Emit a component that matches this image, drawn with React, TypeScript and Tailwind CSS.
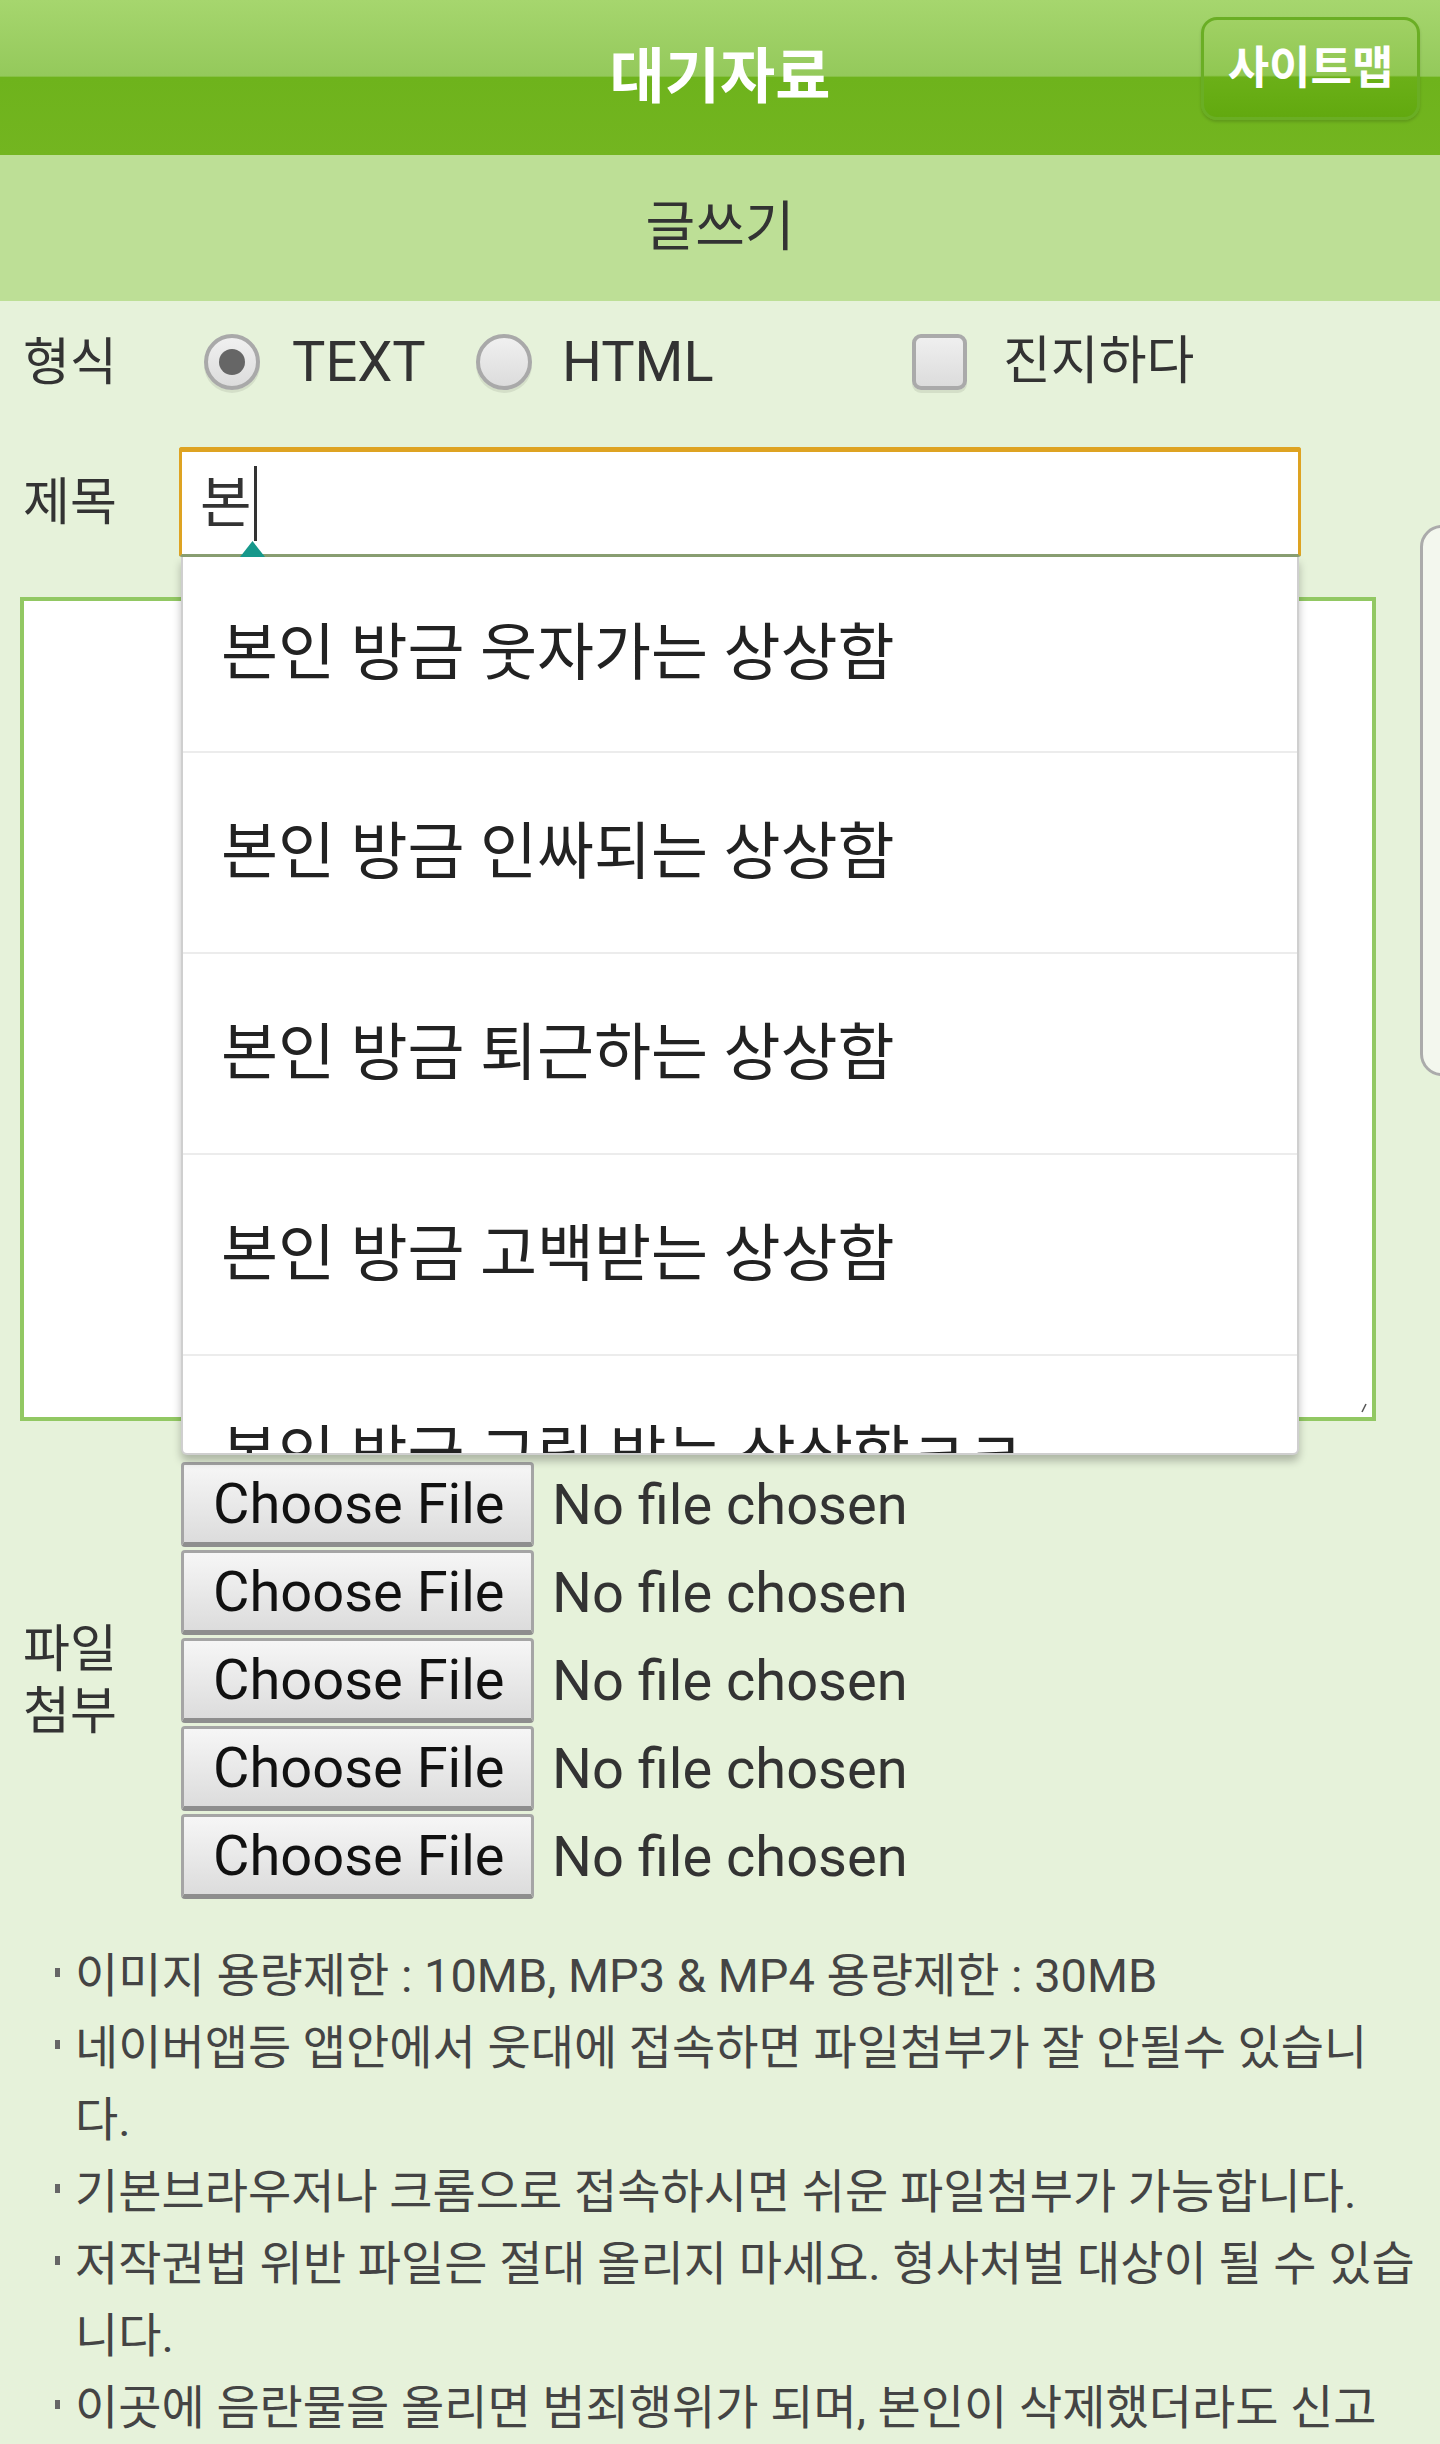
import React from "react";

const suggestions = [
  "본인 방금 웃자가는 상상함",
  "본인 방금 인싸되는 상상함",
  "본인 방금 퇴근하는 상상함",
  "본인 방금 고백받는 상상함",
  "본인 방금 그림 받는 상상함ㅋㅋ",
];

const notes = [
  "이미지 용량제한 : 10MB, MP3 & MP4 용량제한 : 30MB",
  "네이버앱등 앱안에서 웃대에 접속하면 파일첨부가 잘 안될수 있습니다.",
  "기본브라우저나 크롬으로 접속하시면 쉬운 파일첨부가 가능합니다.",
  "저작권법 위반 파일은 절대 올리지 마세요. 형사처벌 대상이 될 수 있습니다.",
  "이곳에 음란물을 올리면 범죄행위가 되며, 본인이 삭제했더라도 신고 시 처벌받을 수 있습니다.",
];

export default function App() {
  return (
    <div className="relative h-[2444px] w-[1440px] overflow-hidden bg-[#e6f2da] font-['Roboto','Noto_Sans_CJK_KR',sans-serif] text-[#333]">
      {/* Top bar */}
      <header className="relative flex h-[155px] items-center justify-center bg-[linear-gradient(180deg,#a6d66e_0%,#94c95b_49%,#6eb31c_50%,#73b520_100%)]">
        <h1 className="text-[60px] font-bold leading-none text-white">대기자료</h1>
        <button className="absolute right-[20px] top-[17px] flex h-[103px] w-[219px] items-center justify-center rounded-[16px] border-[3px] border-[#6aae24] bg-[linear-gradient(180deg,#a0d164_0%,#90c752_57%,#6bb018_59%,#62a90f_100%)] text-[45px] font-semibold leading-none text-white shadow-[0_2px_3px_rgba(0,0,0,0.15)]">
          사이트맵
        </button>
      </header>

      <div className="flex h-[146px] items-center justify-center bg-[#bddf96] text-[54px] leading-none text-[#333]">
        글쓰기
      </div>

      <div className="pl-[20px]">
        {/* format row */}
        <div className="flex h-[122px] items-center">
          <span className="w-[159px] pl-[3px] text-[51px] leading-none">형식</span>
          <Radio checked className="ml-[25px]" />
          <span className="ml-[32px] w-[184px] text-[56px] leading-none">TEXT</span>
          <Radio />
          <span className="ml-[30px] w-[350px] text-[56px] leading-none">HTML</span>
          <div className="h-[56px] w-[55px] rounded-[9px] border-[4px] border-[#aaaaaa] bg-[linear-gradient(180deg,#efefef,#dcdcdc)] shadow-[0_3px_0_rgba(0,0,0,0.08)]" />
          <span className="ml-[36px] text-[52px] leading-none">진지하다</span>
        </div>

        {/* title row */}
        <div className="flex items-center pt-[24px]">
          <span className="w-[159px] pl-[3px] text-[51px] leading-none">제목</span>
          <div className="flex h-[110px] w-[1122px] items-center rounded-[3px] border-[3px] border-t-[5px] border-[#dea322] border-b-[#8a9f72] bg-white pl-[18px]">
            <span className="text-[56px] leading-none text-[#333]">본</span>
            <span className="ml-[2px] inline-block h-[75px] w-[3px] bg-[#333]" />
          </div>
        </div>

        {/* content */}
        <div className="mt-[40px] h-[824px] w-[1356px] border-[4px] border-[#92c863] bg-white">
          <div className="flex h-full items-end justify-end p-[4px]">
            <svg width="8" height="10" viewBox="0 0 8 10">
              <path d="M6 1 L2 9" stroke="#555" strokeWidth="1.5" />
            </svg>
          </div>
        </div>

        {/* attachments */}
        <div className="mt-[41px] flex">
          <div className="flex w-[161px] items-center pl-[3px] text-[51px] leading-[62px]">
            파일
            <br />
            첨부
          </div>
          <div className="flex flex-col gap-[3px]">
            {[0, 1, 2, 3, 4].map((i) => (
              <div key={i} className="flex items-center">
                <div className="flex h-[85px] w-[353px] items-center rounded-[4px] border-[3px] border-b-[5px] border-[#a5a5a5] border-b-[#8e8e8e] bg-[linear-gradient(180deg,#f6f6f6,#dcdcdc)] pl-[29px] text-[56px] leading-none text-[#111]">
                  Choose File
                </div>
                <span className="ml-[18px] text-[56px] leading-none text-[#333]">No file chosen</span>
              </div>
            ))}
          </div>
        </div>
      </div>

      {/* notes */}
      <ul className="mt-[41px] pl-[55px] pr-[25px] text-[47px] leading-[72px] text-[#444]">
        {notes.map((n) => (
          <li key={n} className="flex">
            <span className="flex h-[72px] w-[20px] shrink-0 items-start pt-[28px]">
              <span className="h-[9px] w-[5px] bg-[#666]" />
            </span>
            <span>{n}</span>
          </li>
        ))}
      </ul>

      {/* autocomplete dropdown */}
      <div className="absolute left-[181px] top-[557px] h-[898px] w-[1118px] overflow-hidden rounded-b-[6px] border-x-[2px] border-b-[2px] border-[#cfcfcf] bg-white shadow-[0_6px_8px_rgba(0,0,0,0.25)]">
        {suggestions.map((s, i) => (
          <div
            key={s}
            className={`flex shrink-0 items-center border-b-[2px] border-[#ececec] pl-[38px] text-[62px] leading-none text-[#222] ${i === 0 ? "h-[196px]" : "h-[201px]"}`}
          >
            {s}
          </div>
        ))}
      </div>

      {/* caret handle */}
      <svg className="absolute left-[240px] top-[541px]" width="25" height="16" viewBox="0 0 25 16">
        <path d="M12.5 0 L25 16 L0 16 Z" fill="#16988b" />
      </svg>

      {/* side handle */}
      <div className="absolute left-[1420px] top-[525px] h-[551px] w-[60px] rounded-[22px] border-[3px] border-[#ababab] bg-[#f3f7ee]" />
    </div>
  );
}

function Radio({ checked = false, className = "" }: { checked?: boolean; className?: string }) {
  return (
    <div
      className={`flex h-[56px] w-[56px] shrink-0 items-center justify-center rounded-full border-[4px] border-[#a9a9a9] bg-[linear-gradient(180deg,#f0f0f0,#dcdcdc)] shadow-[0_3px_0_rgba(0,0,0,0.08)] ${className}`}
    >
      {checked && <div className="h-[26px] w-[26px] rounded-full bg-[#666]" />}
    </div>
  );
}
